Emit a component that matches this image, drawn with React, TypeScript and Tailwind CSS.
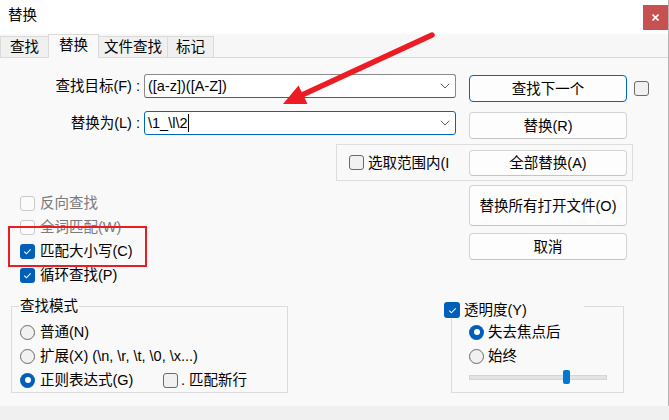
import React from "react"

function Check({ checked, disabled }: { checked?: boolean; disabled?: boolean }) {
  if (checked) {
    return (
      <span className="w-[15px] h-[15px] shrink-0 rounded-[3px] bg-[#005fb8] flex items-center justify-center">
        <svg width="11" height="11" viewBox="0 0 11 11">
          <path d="M2.3 5.7 L4.4 7.8 L8.7 3.4" fill="none" stroke="#fff" strokeWidth="1.1" />
        </svg>
      </span>
    )
  }
  return (
    <span
      className={`w-[15px] h-[15px] shrink-0 rounded-[3px] border ${
        disabled ? "border-[#cacaca] bg-[#fbfbfb]" : "border-[#6a6a6a] bg-[#f1f1f1]"
      }`}
    />
  )
}

function Radio({ checked }: { checked?: boolean }) {
  if (checked) {
    return (
      <span className="w-[15px] h-[15px] shrink-0 rounded-full bg-[#005fb8] flex items-center justify-center">
        <span className="w-[6px] h-[6px] rounded-full bg-white" />
      </span>
    )
  }
  return <span className="w-[15px] h-[15px] shrink-0 rounded-full border border-[#6a6a6a] bg-[#f1f1f1]" />
}

function Btn({ children, primary, className = "" }: { children: React.ReactNode; primary?: boolean; className?: string }) {
  return (
    <div
      className={`w-[158px] shrink-0 flex items-center justify-center rounded-[4px] bg-[#fdfdfd] border leading-[18px] ${
        primary ? "border-[#0067c0]" : "border-[#d3d3d3] border-b-[#c4c4c4]"
      } ${className}`}
    >
      {children}
    </div>
  )
}

function Chevron() {
  return (
    <svg width="10" height="6" viewBox="0 0 10 6" className="shrink-0">
      <path d="M0.8 0.8 L5 5 L9.2 0.8" fill="none" stroke="#5c5c5c" strokeWidth="1" />
    </svg>
  )
}

export default function App() {
  return (
    <div className="relative w-[669px] h-[420px] overflow-hidden bg-[#f0f0f0] text-black text-[14.5px] font-['Liberation_Sans','Noto_Sans_CJK_SC',sans-serif]">
      <div className="w-[669px] h-[406px] flex flex-col border-r border-[#b4b4b4]">
        {/* title bar */}
        <div className="h-[34px] bg-white flex items-start shrink-0">
          <span className="pl-[8px] pt-[7px] leading-[16px]">替换</span>
          <div className="ml-auto mt-[5px] w-[25px] h-[25px] bg-[#c75050] flex items-center justify-center">
            <svg width="7" height="7" viewBox="0 0 7 7">
              <path d="M0.5 0.5 L6.5 6.5 M6.5 0.5 L0.5 6.5" stroke="#fff" strokeWidth="1.6" />
            </svg>
          </div>
        </div>

        {/* tabs */}
        <div className="h-[23px] bg-[#f7f7f7] flex items-end shrink-0">
          <div className="w-[48px] h-[21px] bg-[#f0f0f0] border-l border-t border-[#d9d9d9] flex items-center justify-center leading-[16px]">查找</div>
          <div className="relative z-10 w-[51px] h-[24px] -mb-[1px] bg-[#f9f9f9] border-l border-t border-r border-[#d9d9d9] flex items-start justify-center pt-[2px] leading-[16px]">替换</div>
          <div className="w-[69px] h-[21px] bg-[#f0f0f0] border-t border-r border-[#d9d9d9] flex items-center justify-center leading-[16px]">文件查找</div>
          <div className="w-[46px] h-[21px] bg-[#f0f0f0] border-t border-r border-[#d9d9d9] flex items-center justify-center leading-[16px]">标记</div>
        </div>

        {/* panel */}
        <div className="flex-1 bg-[#f9f9f9] border-t border-[#dadada] flex flex-col">
          {/* find row */}
          <div className="flex items-start pt-[16px]">
            <div className="w-[140px] h-[24px] flex items-center justify-end leading-[18px]">查找目标(F) :</div>
            <div className="ml-[4px] w-[312px] h-[24px] rounded-[3px] border border-[#8a8a8a] border-b-[#5a5a5a] bg-white flex items-center pl-[3px] pr-[5px]">
              <span className="flex-1 leading-[18px]">([a-z])([A-Z])</span>
              <Chevron />
            </div>
            <Btn primary className="ml-[13px] mt-[1px] h-[27px]">查找下一个</Btn>
            <span className="ml-[7px] mt-[7px] flex">
              <Check />
            </span>
          </div>

          {/* replace row */}
          <div className="flex items-start mt-[9px]">
            <div className="w-[140px] h-[24px] flex items-center justify-end leading-[18px]">替换为(L) :</div>
            <div className="ml-[4px] w-[312px] h-[24px] rounded-[3px] border border-[#0067c0] bg-white flex items-center pl-[3px] pr-[5px]">
              <span className="leading-[18px]">\1_\l\2</span>
              <span className="w-px h-[18px] bg-black" />
              <span className="flex-1" />
              <Chevron />
            </div>
            <Btn className="ml-[13px] mt-[1px] h-[27px]">替换(R)</Btn>
          </div>

          {/* in-selection group */}
          <div className="ml-[336px] mt-[5px] w-[297px] h-[37px] border border-[#dedede] flex items-center">
            <span className="ml-[12px] flex">
              <Check />
            </span>
            <span className="ml-[4px] w-[84px] whitespace-nowrap leading-[18px]">选取范围内(I</span>
            <Btn className="ml-[17px] h-[26px]">全部替换(A)</Btn>
          </div>

          {/* options + buttons */}
          <div className="flex items-start">
            <div className="w-[469px] pt-[10px] pl-[20px] flex flex-col">
              <div className="h-[24px] flex items-center gap-[5px] text-[#7a7a7a] leading-[18px]">
                <Check disabled />
                反向查找
              </div>
              <div className="h-[24px] flex items-center gap-[5px] text-[#7a7a7a] leading-[18px]">
                <Check disabled />
                全词匹配(W)
              </div>
              <div className="h-[24px] flex items-center gap-[5px] leading-[18px]">
                <Check checked />
                匹配大小写(C)
              </div>
              <div className="h-[24px] flex items-center gap-[5px] leading-[18px]">
                <Check checked />
                循环查找(P)
              </div>
            </div>
            <div className="pt-[4px] flex flex-col gap-[7px]">
              <Btn className="h-[41px]">替换所有打开文件(O)</Btn>
              <Btn className="h-[27px]">取消</Btn>
            </div>
          </div>

          {/* bottom groups */}
          <div className="flex items-start mt-[11px]">
            <div className="ml-[11px] w-[277px] flex flex-col">
              <div className="h-[16px] flex items-start">
                <span className="w-[8px] h-[8px] mt-[8px] border-t border-l border-[#dcdcdc]" />
                <span className="px-[1px] leading-[16px]">查找模式</span>
                <span className="flex-1 h-[8px] mt-[8px] border-t border-r border-[#dcdcdc]" />
              </div>
              <div className="h-[79px] border-l border-r border-b border-[#dcdcdc] pt-[6px] pl-[8px] flex flex-col">
                <div className="h-[24px] shrink-0 flex items-center gap-[5px] leading-[18px]">
                  <Radio />
                  普通(N)
                </div>
                <div className="h-[24px] shrink-0 flex items-center gap-[5px] leading-[18px]">
                  <Radio />
                  扩展(X) (\n, \r, \t, \0, \x...)
                </div>
                <div className="h-[24px] shrink-0 flex items-center leading-[18px]">
                  <Radio checked />
                  <span className="ml-[5px] w-[123px]">正则表达式(G)</span>
                  <Check />
                  <span className="ml-[3px]">. 匹配新行</span>
                </div>
              </div>
            </div>

            <div className="ml-[163px] mt-[4px] w-[173px] flex flex-col">
              <div className="h-[16px] flex items-start">
                <div className="-ml-[7px] w-[140px] h-[16px] flex items-center gap-[4px] leading-[16px]">
                  <span className="w-[16px] h-[16px] shrink-0 rounded-[3px] bg-[#005fb8] flex items-center justify-center">
                    <svg width="11" height="11" viewBox="0 0 11 11">
                      <path d="M2.3 5.7 L4.4 7.8 L8.7 3.4" fill="none" stroke="#fff" strokeWidth="1.1" />
                    </svg>
                  </span>
                  透明度(Y)
                </div>
                <span className="flex-1 h-[12px] mt-[4px] border-t border-r border-[#dcdcdc]" />
              </div>
              <div className="h-[75px] border-l border-r border-b border-[#dcdcdc] pt-[2px] pl-[17px] flex flex-col">
                <div className="h-[24px] shrink-0 flex items-center gap-[4px] leading-[18px]">
                  <Radio checked />
                  失去焦点后
                </div>
                <div className="h-[24px] shrink-0 flex items-center gap-[4px] leading-[18px]">
                  <Radio />
                  始终
                </div>
                <div className="relative mt-[2px] w-[138px] h-[14px] flex items-center">
                  <span className="w-[138px] h-[5px] bg-[#e3e3e3] border border-[#d4d4d4]" />
                  <span className="absolute left-[94px] top-0 w-[7px] h-[14px] rounded-[2px] bg-[#0078d4]" />
                </div>
              </div>
            </div>
          </div>
        </div>
      </div>

      {/* annotations */}
      <div className="absolute left-[8px] top-[226px] w-[139px] h-[41px] border-2 border-[#ec1c24] pointer-events-none" />
      <svg className="absolute left-0 top-0 pointer-events-none" width="669" height="420" viewBox="0 0 669 420">
        <line x1="432" y1="35" x2="302" y2="95" stroke="#ec1c24" strokeWidth="5.5" strokeLinecap="round" />
        <polygon points="283,104 298.5,85.5 307.5,104" fill="#ec1c24" />
      </svg>
    </div>
  )
}
